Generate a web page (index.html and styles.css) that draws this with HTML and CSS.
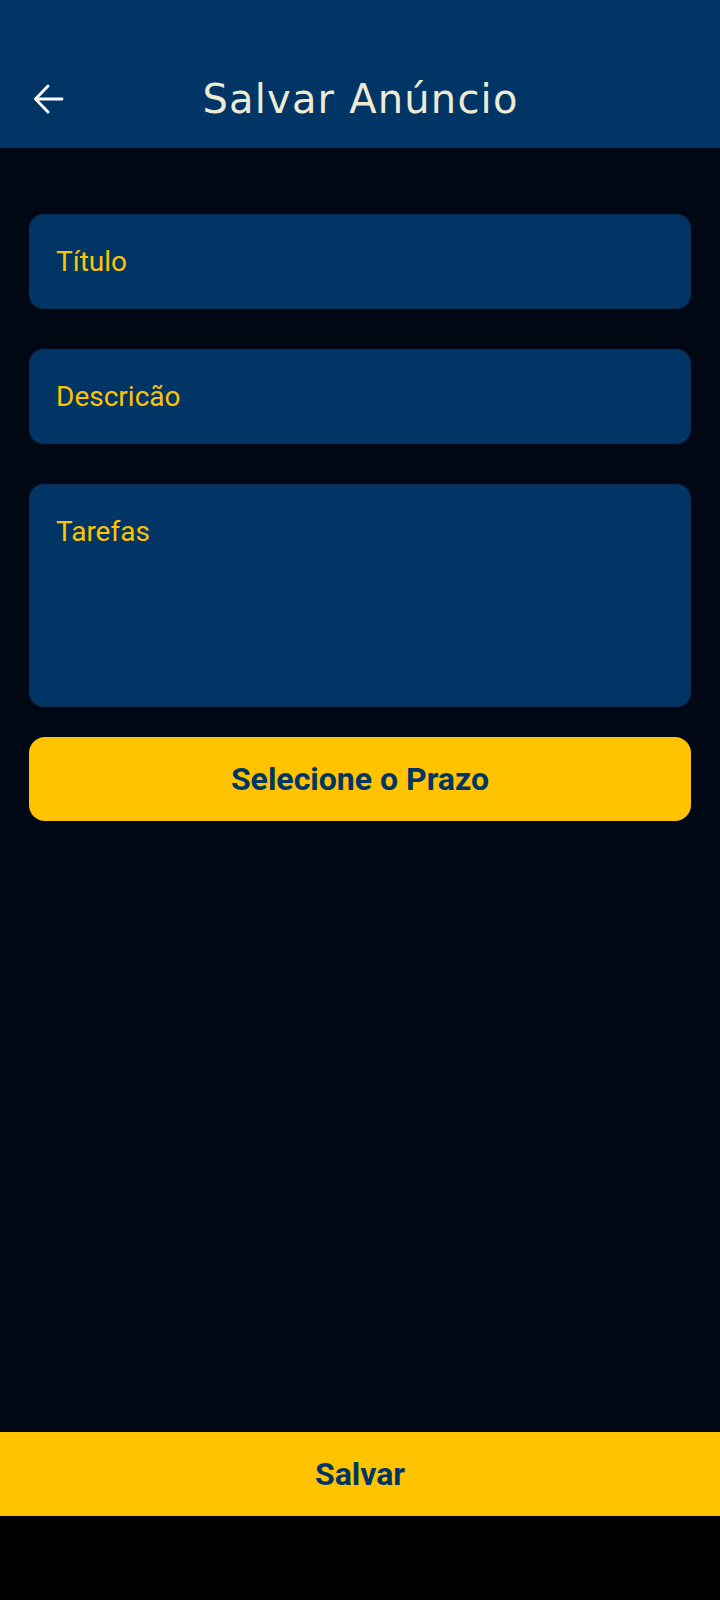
FILE: index.html
```html
<!DOCTYPE html>
<html lang="pt-BR">
<head>
<meta charset="utf-8">
<title>Salvar Anúncio</title>
<link rel="stylesheet" href="styles.css">
</head>
<body>
<div class="screen">
  <header class="appbar">
    <div class="toolbar">
      <button class="back" aria-label="Voltar">
        <svg width="30" height="30" viewBox="0 0 30 30" fill="none" stroke="#ffffff" stroke-width="2.8" stroke-linecap="round" stroke-linejoin="round">
          <path d="M28 15H2"/>
          <path d="M14 2L1.5 15L14 28"/>
        </svg>
      </button>
      <h1 class="title">Salvar Anúncio</h1>
      <span class="spacer"></span>
    </div>
  </header>
  <main class="content">
    <div class="field">Título</div>
    <div class="field">Descricão</div>
    <div class="field field-tall">Tarefas</div>
    <button class="btn-deadline">Selecione o Prazo</button>
  </main>
  <button class="btn-save">Salvar</button>
  <div class="navbar"></div>
</div>
</body>
</html>
```
FILE: styles.css
```css
* { box-sizing: border-box; }
html, body {
  margin: 0;
  padding: 0;
  background: #000814;
}
.screen {
  width: 720px;
  height: 1600px;
  display: flex;
  flex-direction: column;
  font-family: Roboto, "Liberation Sans", sans-serif;
}
.appbar {
  background: #003566;
  height: 148px;
  padding-top: 50px;
}
.toolbar {
  height: 98px;
  display: grid;
  grid-template-columns: 1fr auto 1fr;
  align-items: center;
}
.back {
  justify-self: start;
  margin-left: 34px;
  padding: 0;
  background: none;
  border: 0;
  width: 30px;
  height: 30px;
  display: flex;
}
.title {
  margin: 0;
  font-family: "DejaVu Sans", sans-serif;
  font-weight: 400;
  font-size: 40px;
  letter-spacing: 1.2px;
  color: #eeebd4;
  line-height: 1;
  padding-bottom: 1px;
  padding-left: 1px;
}
.content {
  flex: 1;
  padding: 66px 29px 0;
  display: flex;
  flex-direction: column;
}
.field {
  background: #003566;
  border: 1px solid #0a2d52;
  border-radius: 14px;
  box-shadow: 0 0 3px rgba(0, 20, 50, 0.6);
  color: #ffc300;
  font-size: 28px;
  line-height: 36px;
  height: 95px;
  padding: 29px 26px 0;
  margin-bottom: 40px;
}
.field-tall {
  height: 223px;
  margin-bottom: 30px;
}
.btn-deadline {
  height: 84px;
  border: 0;
  border-radius: 16px;
  background: #ffc300;
  color: #003566;
  font-family: Roboto, "Liberation Sans", sans-serif;
  font-weight: 700;
  font-size: 32px;
  padding: 0;
}
.btn-save {
  height: 84px;
  border: 0;
  border-radius: 0;
  background: #ffc300;
  color: #003566;
  font-family: Roboto, "Liberation Sans", sans-serif;
  font-weight: 700;
  font-size: 32px;
  padding: 0;
  width: 100%;
}
.navbar {
  height: 84px;
  background: #000000;
}
```
